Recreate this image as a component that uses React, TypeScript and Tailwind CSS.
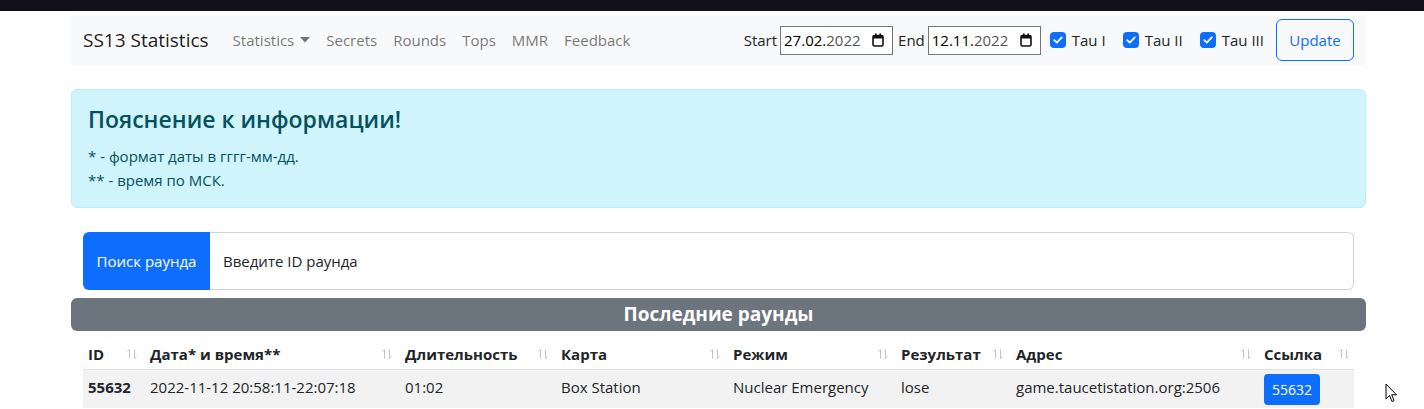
import React from "react";

const font = { fontFamily: '"Open Sans", "Noto Sans", sans-serif' };

function Calendar() {
  return (
    <svg width="12" height="14" viewBox="0 0 12 14" className="shrink-0">
      <rect x="1" y="2.5" width="10" height="10.5" rx="1.5" fill="none" stroke="#111" strokeWidth="1.6" />
      <rect x="1" y="2.5" width="10" height="3" fill="#111" />
      <rect x="3" y="0.5" width="1.6" height="3" fill="#111" />
      <rect x="7.4" y="0.5" width="1.6" height="3" fill="#111" />
    </svg>
  );
}

function DateBox({ d, y }: { d: string; y: string }) {
  return (
    <div className="flex items-center justify-between w-[113px] h-[29px] border border-[#767676] bg-white pl-[3px] pr-[8px] text-[15px] text-black">
      <span>
        {d}
        <span className="text-[#545454]">{y}</span>
      </span>
      <Calendar />
    </div>
  );
}

function Check({ label }: { label: string }) {
  return (
    <label className="flex items-center gap-[6px] text-[15px] text-[#212529]">
      <span className="w-4 h-4 rounded-[4px] bg-[#0d6efd] flex items-center justify-center">
        <svg width="10" height="8" viewBox="0 0 10 8">
          <path d="M1.2 4.2 L3.8 6.6 L8.8 1.4" fill="none" stroke="white" strokeWidth="1.8" strokeLinecap="round" strokeLinejoin="round" />
        </svg>
      </span>
      {label}
    </label>
  );
}

function Sort() {
  return (
    <svg width="12" height="12" viewBox="0 0 12 12" className="shrink-0">
      <path d="M3.5 10.5 V1.5 M1.5 3.5 L3.5 1.5" fill="none" stroke="#c4c4c4" strokeWidth="1" />
      <path d="M8.5 1.5 V10.5 M10.5 8.5 L8.5 10.5" fill="none" stroke="#c4c4c4" strokeWidth="1" />
    </svg>
  );
}

const cols = [
  { t: "ID", w: "w-[59px]", p: "pl-[5px]" },
  { t: "Дата* и время**", w: "w-[255px]", p: "pl-[8px]" },
  { t: "Длительность", w: "w-[156px]", p: "pl-[8px]" },
  { t: "Карта", w: "w-[172px]", p: "pl-[8px]" },
  { t: "Режим", w: "w-[168px]", p: "pl-[8px]" },
  { t: "Результат", w: "w-[115px]", p: "pl-[8px]" },
  { t: "Адрес", w: "w-[248px]", p: "pl-[8px]" },
  { t: "Ссылка", w: "w-[98px]", p: "pl-[8px]" },
];

const row = [
  "55632",
  "2022-11-12 20:58:11-22:07:18",
  "01:02",
  "Box Station",
  "Nuclear Emergency",
  "lose",
  "game.taucetistation.org:2506",
];

export default function App() {
  return (
    <div className="relative min-h-[409px] bg-white text-[#212529] overflow-hidden" style={font}>
      <div className="h-[11px] bg-[#100f1a]" />
      <div className="ml-[71px] w-[1295px]">
        <nav className="mt-[4px] h-[50px] bg-[#f8f9fa] flex items-center px-3">
          <span className="text-[19px] text-black/90 mr-4">SS13 Statistics</span>
          <div className="flex items-center text-[15px] text-black/55">
            <span className="px-2 flex items-center gap-[6px]">
              Statistics
              <svg width="10" height="6" viewBox="0 0 10 6">
                <path d="M0 0 H10 L5 5.5 Z" fill="#737373" />
              </svg>
            </span>
            <span className="px-2">Secrets</span>
            <span className="px-2">Rounds</span>
            <span className="px-2">Tops</span>
            <span className="px-2">MMR</span>
            <span className="px-2">Feedback</span>
          </div>
          <div className="ml-auto flex items-center text-[15px] text-[#212529]">
            <span className="mr-[3px]">Start</span>
            <DateBox d="27.02." y="2022" />
            <span className="ml-[5px] mr-[3px]">End</span>
            <DateBox d="12.11." y="2022" />
            <div className="ml-[9px] flex items-center gap-[17px]">
              <Check label="Tau I" />
              <Check label="Tau II" />
              <Check label="Tau III" />
            </div>
            <button className="ml-[12px] h-[42px] w-[78px] border border-[#0d6efd] rounded-[6px] text-[#0d6efd] text-[15px]">
              Update
            </button>
          </div>
        </nav>

        <div className="mt-[24px] h-[119px] bg-[#cff4fc] border border-[#b6effb] rounded-[6px] text-[#055160] px-4 pt-[16px]">
          <h4 className="text-[23px] font-semibold leading-[1.2] mb-[10px]">Пояснение к информации!</h4>
          <p className="text-[15px] leading-[24px]">* - формат даты в гггг-мм-дд.</p>
          <p className="text-[15px] leading-[24px]">** - время по МСК.</p>
        </div>

        <div className="px-3 mt-[24px]">
          <div className="flex h-[58px] text-[15px]">
            <div className="w-[127px] bg-[#0d6efd] text-white rounded-l-[6px] flex items-center justify-center">
              Поиск раунда
            </div>
            <div className="flex-1 border border-l-0 border-[#ced4da] rounded-r-[6px] flex items-center px-[13px] text-[#212529]">
              Введите ID раунда
            </div>
          </div>
        </div>

        <div className="mt-[8px] h-[33px] bg-[#6c757d] rounded-[6px] flex items-center justify-center text-white text-[19px] font-bold">
          Последние раунды
        </div>

        <div className="px-3 mt-[8px] text-[15px]">
          <div className="flex h-[31px] items-center border-b border-[#dee2e6] font-bold text-[#212529]">
            {cols.map((c) => (
              <div key={c.t} className={`${c.w} ${c.p} flex items-center justify-between pr-[4px]`}>
                <span>{c.t}</span>
                <Sort />
              </div>
            ))}
          </div>
          <div className="flex h-[38px] items-center bg-[#f2f2f2]">
            {row.map((v, i) => (
              <div key={i} className={`${cols[i].w} ${cols[i].p} pb-[3px] ${i === 0 ? "font-bold" : ""}`}>
                {v}
              </div>
            ))}
            <div className={`${cols[7].w} pl-[8px]`}>
              <span className="inline-flex items-center h-[31px] px-[8px] rounded-[4px] bg-[#0d6efd] text-white text-[14px]">
                55632
              </span>
            </div>
          </div>
        </div>
      </div>

      <svg className="absolute left-[1385px] top-[383px]" width="13" height="20" viewBox="0 0 13 20">
        <path d="M1 1 V16 L4.5 12.5 L7 18.5 L9 17.5 L6.7 11.8 H11.5 Z" fill="white" stroke="black" strokeWidth="1" strokeLinejoin="round" />
      </svg>
    </div>
  );
}
